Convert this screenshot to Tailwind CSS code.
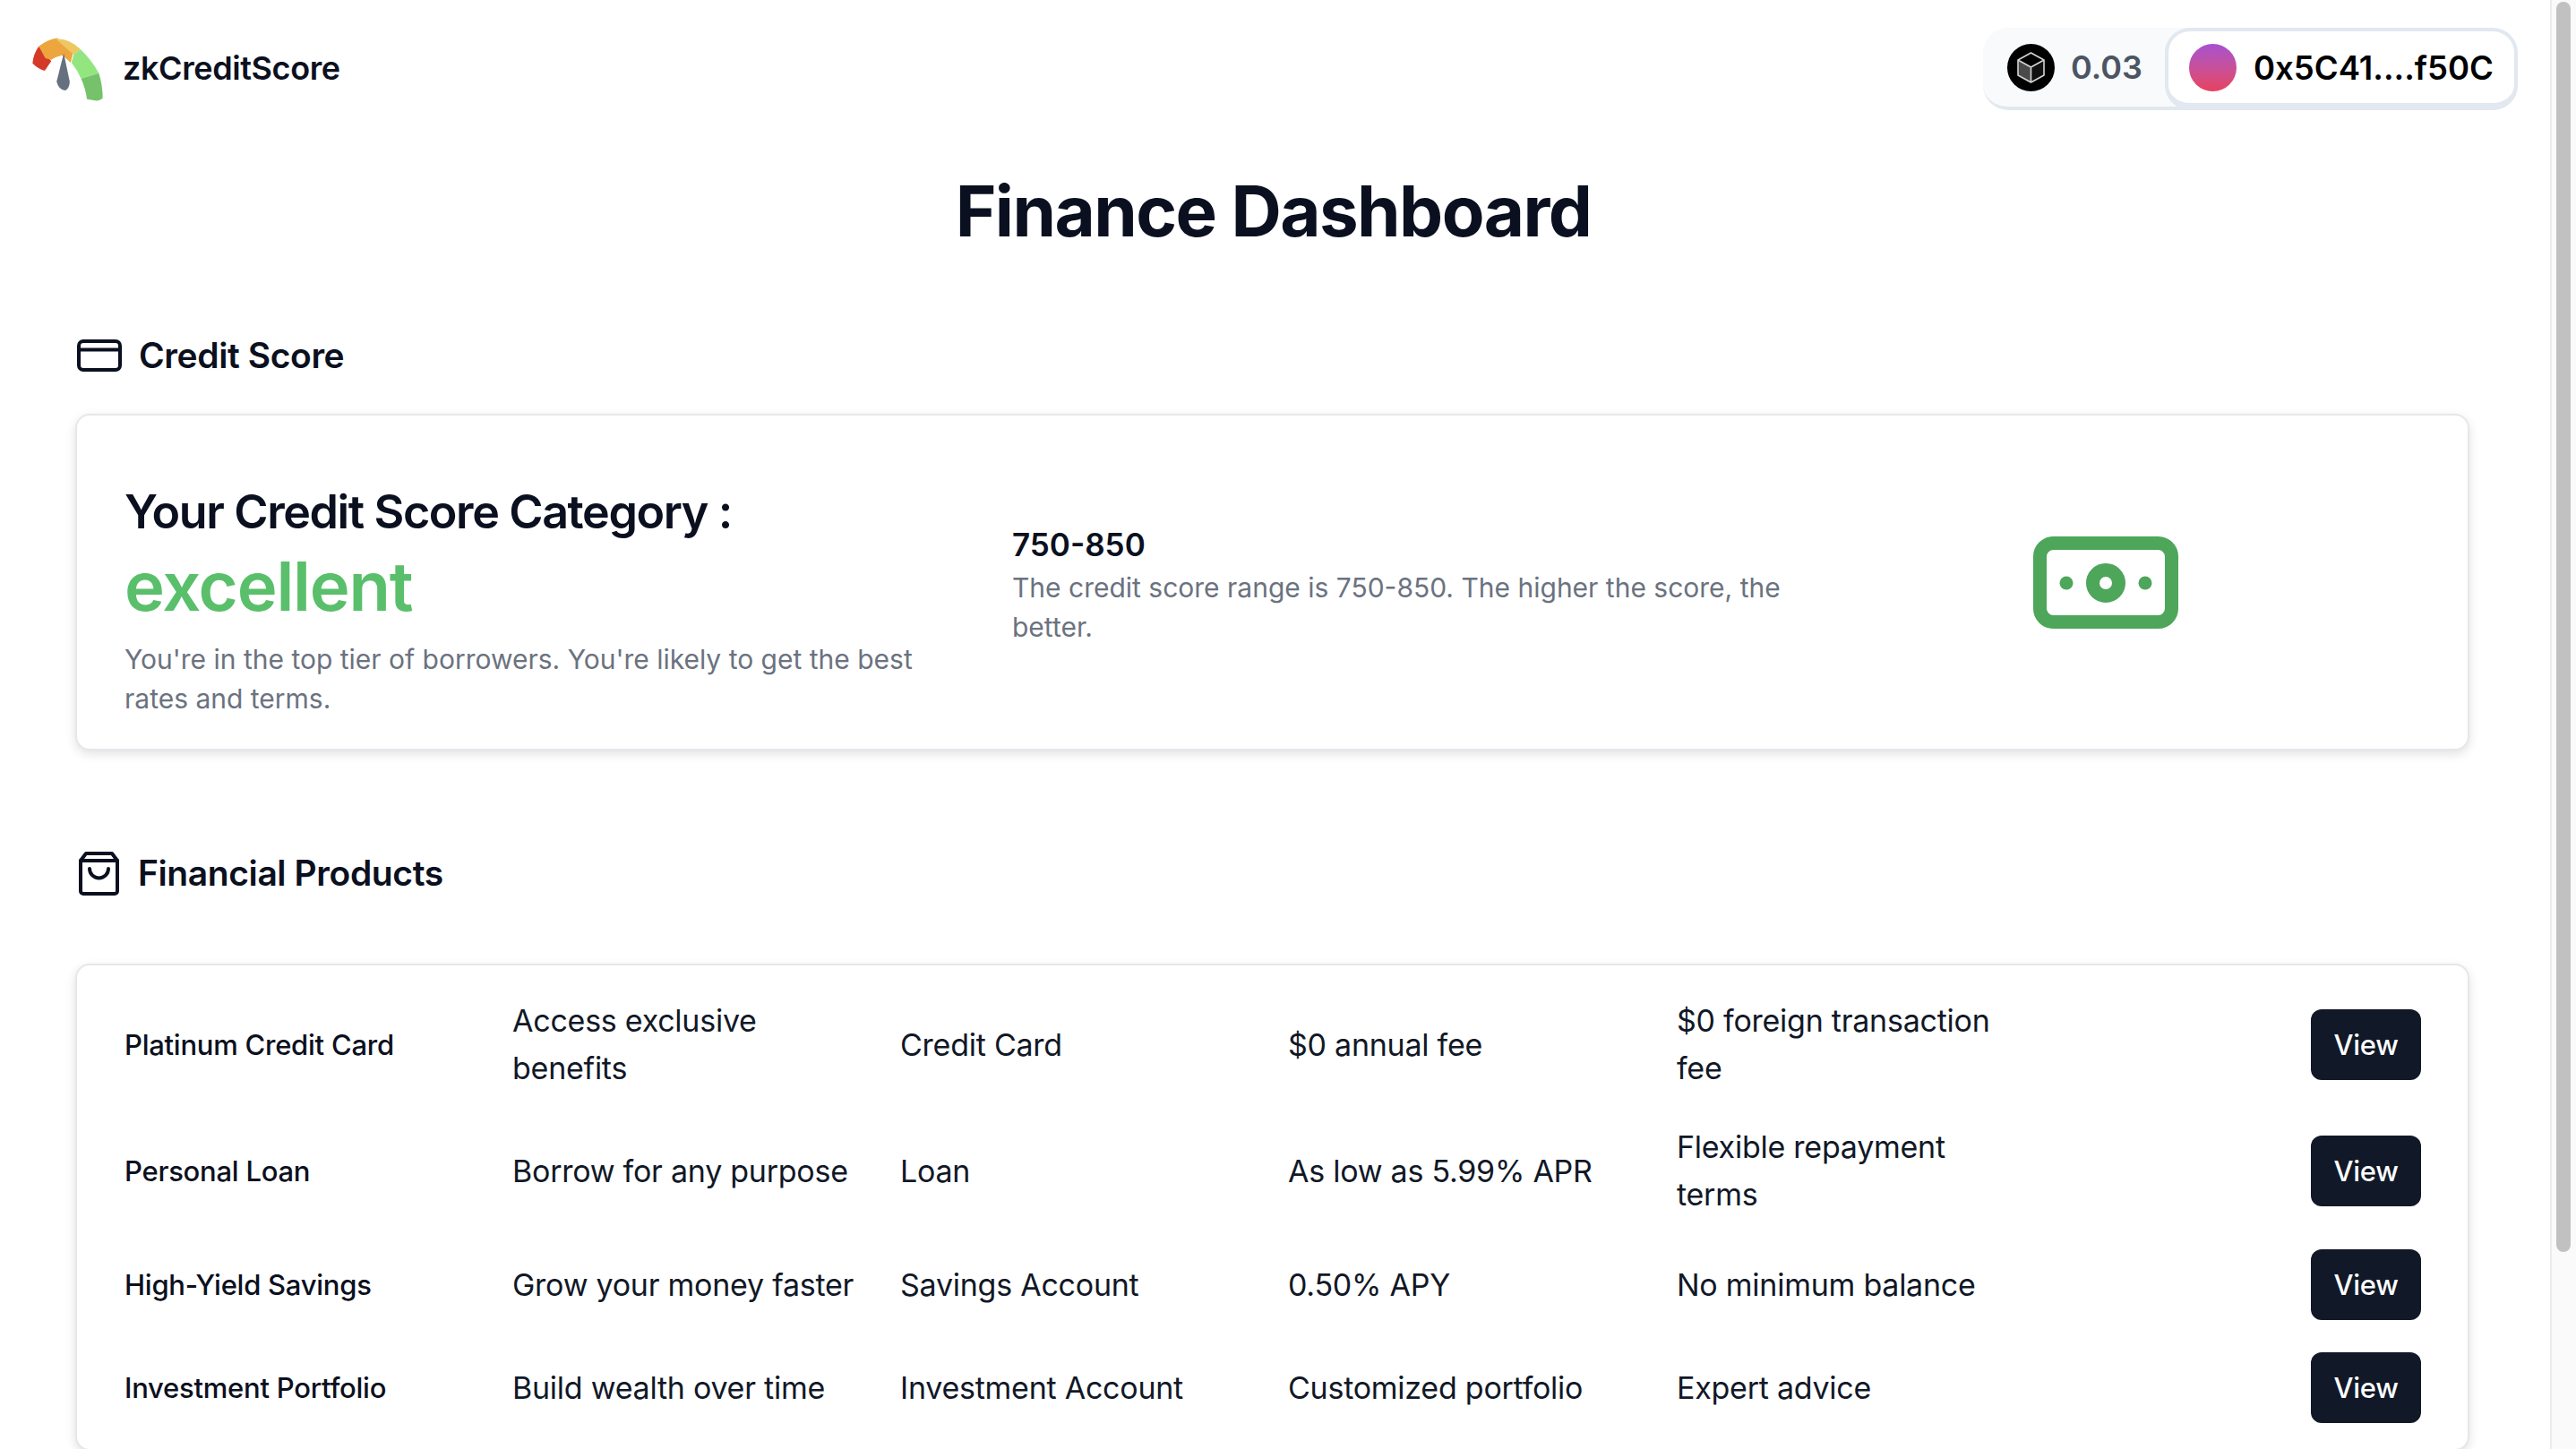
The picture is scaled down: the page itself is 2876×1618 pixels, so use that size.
<!DOCTYPE html>
<html lang="en">

<head>
    <meta charset="UTF-8">
    <meta name="viewport" content="width=device-width, initial-scale=1.0">
    <title>zkCreditScore</title>
    <script src="https://cdn.jsdelivr.net/npm/@tailwindcss/browser@4"></script>
</head>

<body class="bg-white font-['Inter',sans-serif] text-[#0b1020] overflow-hidden">
    <div class="flex h-[1618px] overflow-hidden">
        <main class="flex-1 min-w-0">
            <!-- Header -->
            <header class="h-[154px] flex items-center justify-between pl-[34px] pr-[36px]">
                <div class="flex items-center gap-[20px]">
                    <svg class="w-[83px] h-[75px]" viewBox="100 115 250 225">
                        <path d="M107 207Q110 175 128 150L170 200Q160 215 148 232Q125 225 107 207Z" fill="#d43a27" />
                        <path d="M128 150Q155 128 190 122L245 165L235 205Q222 190 205 180Q185 185 170 195L150 190Z" fill="#eda53e" />
                        <path d="M185 125Q232 122 268 160L245 178Z" fill="#edc761" />
                        <path d="M268 160Q305 195 330 240L270 258Q258 230 238 205L245 178Z" fill="#93e67f" />
                        <path d="M270 258L330 240Q343 280 343 325Q330 335 318 332L290 328Q285 290 270 258Z" fill="#76c26b" />
                        <path d="M212 173L232 268Q232 290 218 298Q195 298 188 268Z" fill="#65717f" />
                    </svg>
                    <span class="text-[36px] font-semibold leading-none tracking-[-0.4px] -mt-[3px]">zkCreditScore</span>
                </div>
                <div class="flex items-center h-[92px] w-[597px] rounded-[28px] bg-[#f8fafc] border-b-4 border-[#e2e8f0]">
                    <div class="flex items-center gap-[18px] pl-[27px] w-[203px]">
                        <span class="w-[53px] h-[53px] rounded-full bg-black flex items-center justify-center shrink-0">
                            <svg class="w-[53px] h-[53px]" viewBox="0 0 53 53" fill="none">
                                <path d="M12 18L26.5 26V43L12 35Z" fill="#4a4a4a" />
                                <path d="M26.5 26L41 18V35L26.5 43Z" fill="#111111" />
                                <path d="M26.5 10L41 18V35L26.5 43L12 35V18ZM12 18L26.5 26L41 18M26.5 26V43" stroke="#d4d4d4" stroke-width="1.6" stroke-linejoin="round" />
                            </svg>
                        </span>
                        <span class="text-[36px] font-semibold text-[#4b5563] leading-none">0.03</span>
                    </div>
                    <div class="flex items-center gap-[19px] pl-[23px] h-[92px] -mb-[4px] flex-1 bg-white border-4 border-[#e2e8f0] border-b-[8px] rounded-[28px]">
                        <span class="w-[53px] h-[53px] rounded-full bg-gradient-to-b from-[#a84fd0] to-[#e8405c] shrink-0"></span>
                        <span class="mt-[2px] text-[36.500px] font-semibold text-black leading-none">0x5C41....f50C</span>
                    </div>
                </div>
            </header>

            <h1 class="mt-[42px] text-center text-[78px] font-bold leading-[80px] tracking-[-1.55px] pr-[4px]">Finance Dashboard</h1>

            <!-- Credit Score -->
            <section class="px-[84px] w-[2841px]">
                <h2 class="mt-[91px] h-[60px] flex items-center gap-[19px] text-[39px] font-semibold tracking-[-0.4px]">
                    <svg class="w-[50px] h-[36px] ml-[2px]" viewBox="0 0 50 36" fill="none" stroke="#0b1020" stroke-width="4" stroke-linejoin="round">
                        <rect x="2" y="2" width="46" height="32" rx="5" />
                        <path d="M2 11.500H48" />
                    </svg>
                    Credit Score
                </h2>
                <div class="mt-[35px] h-[376px] border-2 border-[#e5e7eb] rounded-[16px] bg-white shadow-[0_4px_12px_rgba(0,0,0,0.12)] grid grid-cols-[991px_1140px_auto] items-center pl-[53px]">
                    <div class="mt-[42px]">
                        <p class="text-[52px] font-semibold leading-[64px] tracking-[-1.4px]">Your Credit Score Category :</p>
                        <p class="mt-[2px] text-[76px] font-semibold leading-[96px] tracking-[-1.2px] text-[#5abf6b]">excellent</p>
                        <p class="mt-[12px] text-[30px] leading-[44px] text-[#6b7280] w-[940px]">You're in the top tier of borrowers. You're likely to get the best rates and terms.</p>
                    </div>
                    <div class="mt-[6px]">
                        <p class="text-[35px] font-semibold leading-[48px] -mb-[2px]">750-850</p>
                        <p class="mt-[4px] text-[30px] leading-[44px] text-[#6b7280] w-[900px]">The credit score range is 750-850. The higher the score, the better.</p>
                    </div>
                    <svg class="w-[162px] h-[103px]" viewBox="0 0 162 103" fill="none">
                        <rect x="7.500" y="7.500" width="147" height="88" rx="15" stroke="#4da65a" stroke-width="15" />
                        <circle cx="81" cy="52" r="14.500" stroke="#4da65a" stroke-width="15" />
                        <circle cx="37" cy="52" r="7.500" fill="#4da65a" />
                        <circle cx="125" cy="52" r="7.500" fill="#4da65a" />
                    </svg>
                </div>

                <!-- Financial Products -->
                <h2 class="mt-[107px] h-[60px] flex items-center gap-[21px] text-[39px] font-semibold tracking-[-0.4px]">
                    <svg class="w-[45px] h-[49px] ml-[4px]" viewBox="0 0 45 49" fill="none" stroke="#0b1020" stroke-width="4" stroke-linejoin="round" stroke-linecap="round">
                        <path d="M8 2H37L43 10V44A3 3 0 0 1 40 47H5A3 3 0 0 1 2 44V10Z" />
                        <path d="M2 10H43" />
                        <path d="M12 19A10.500 10.500 0 0 0 33 19" />
                    </svg>
                    Financial Products
                </h2>
                <div class="mt-[71px] h-[544px] border-2 border-[#e5e7eb] rounded-[16px] bg-white shadow-[0_4px_12px_rgba(0,0,0,0.12)] pt-[18px] pl-[53px] pr-[52px] text-[34px] leading-[53px] tracking-[-0.25px] text-[#111827]">
                    <div class="grid grid-cols-[433px_433px_433px_434px_387px_1fr] items-center h-[141px]">
                        <p class="text-[31px] font-medium text-[#0b1020]">Platinum Credit Card</p>
                        <p class="w-[388px] -mt-[2px]">Access exclusive benefits</p>
                        <p>Credit Card</p>
                        <p>$0 annual fee</p>
                        <p class="-mt-[2px]">$0 foreign transaction fee</p>
                        <button class="justify-self-end w-[123px] h-[79px] rounded-[12px] bg-[#111827] text-white text-[31px] font-medium">View</button>
                    </div>
                    <div class="grid grid-cols-[433px_433px_433px_434px_387px_1fr] items-center h-[141px]">
                        <p class="text-[31px] font-medium text-[#0b1020]">Personal Loan</p>
                        <p>Borrow for any purpose</p>
                        <p>Loan</p>
                        <p>As low as 5.99% APR</p>
                        <p class="-mt-[2px]">Flexible repayment terms</p>
                        <button class="justify-self-end w-[123px] h-[79px] rounded-[12px] bg-[#111827] text-white text-[31px] font-medium">View</button>
                    </div>
                    <div class="grid grid-cols-[433px_433px_433px_434px_387px_1fr] items-center h-[113px]">
                        <p class="text-[31px] font-medium text-[#0b1020]">High-Yield Savings</p>
                        <p>Grow your money faster</p>
                        <p>Savings Account</p>
                        <p>0.50% APY</p>
                        <p>No minimum balance</p>
                        <button class="justify-self-end w-[123px] h-[79px] rounded-[12px] bg-[#111827] text-white text-[31px] font-medium">View</button>
                    </div>
                    <div class="grid grid-cols-[433px_433px_433px_434px_387px_1fr] items-center h-[117px]">
                        <p class="text-[31px] font-medium text-[#0b1020]">Investment Portfolio</p>
                        <p>Build wealth over time</p>
                        <p>Investment Account</p>
                        <p>Customized portfolio</p>
                        <p>Expert advice</p>
                        <button class="justify-self-end w-[123px] h-[79px] rounded-[12px] bg-[#111827] text-white text-[31px] font-medium">View</button>
                    </div>
                </div>
            </section>
        </main>

        <!-- Scrollbar -->
        <aside class="w-[29px] shrink-0 bg-[#fafafa] border-l-2 border-[#ebebeb] pl-[5px] pt-[2px]">
            <div class="w-[16px] h-[1396px] rounded-full bg-[#c1c1c1]"></div>
        </aside>
    </div>
</body>

</html>
